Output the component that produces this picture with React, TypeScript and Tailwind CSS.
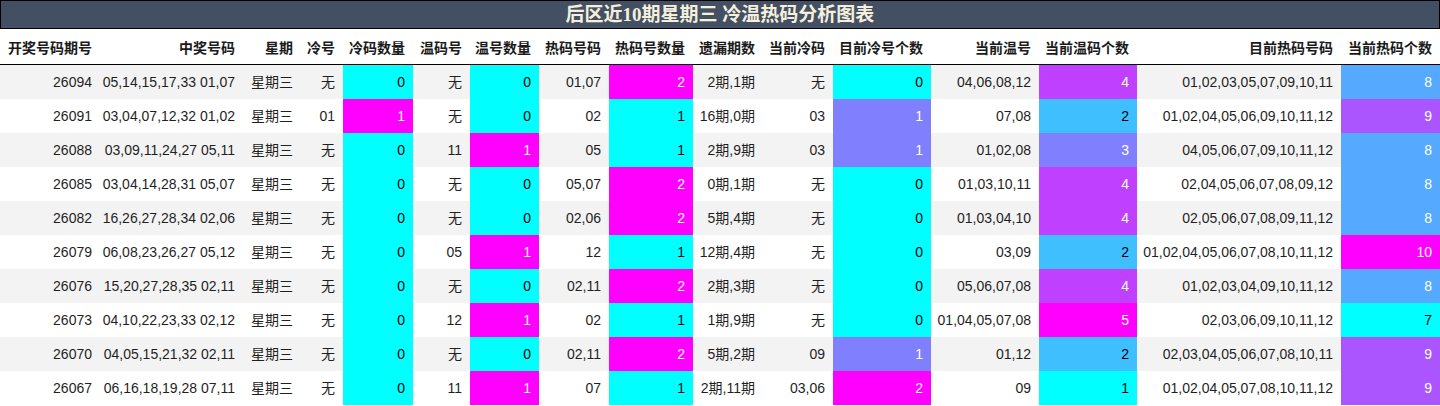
const headers = [
  "开奖号码期号",
  "中奖号码",
  "星期",
  "冷号",
  "冷码数量",
  "温码号",
  "温号数量",
  "热码号码",
  "热码号数量",
  "遗漏期数",
  "当前冷码",
  "目前冷号个数",
  "当前温号",
  "当前温码个数",
  "目前热码号码",
  "当前热码个数",
]

const rows: string[][] = [
  ["26094", "05,14,15,17,33 01,07", "星期三", "无", "0", "无", "0", "01,07", "2", "2期,1期", "无", "0", "04,06,08,12", "4", "01,02,03,05,07,09,10,11", "8"],
  ["26091", "03,04,07,12,32 01,02", "星期三", "01", "1", "无", "0", "02", "1", "16期,0期", "03", "1", "07,08", "2", "01,02,04,05,06,09,10,11,12", "9"],
  ["26088", "03,09,11,24,27 05,11", "星期三", "无", "0", "11", "1", "05", "1", "2期,9期", "03", "1", "01,02,08", "3", "04,05,06,07,09,10,11,12", "8"],
  ["26085", "03,04,14,28,31 05,07", "星期三", "无", "0", "无", "0", "05,07", "2", "0期,1期", "无", "0", "01,03,10,11", "4", "02,04,05,06,07,08,09,12", "8"],
  ["26082", "16,26,27,28,34 02,06", "星期三", "无", "0", "无", "0", "02,06", "2", "5期,4期", "无", "0", "01,03,04,10", "4", "02,05,06,07,08,09,11,12", "8"],
  ["26079", "06,08,23,26,27 05,12", "星期三", "无", "0", "05", "1", "12", "1", "12期,4期", "无", "0", "03,09", "2", "01,02,04,05,06,07,08,10,11,12", "10"],
  ["26076", "15,20,27,28,35 02,11", "星期三", "无", "0", "无", "0", "02,11", "2", "2期,3期", "无", "0", "05,06,07,08", "4", "01,02,03,04,09,10,11,12", "8"],
  ["26073", "04,10,22,23,33 02,12", "星期三", "无", "0", "12", "1", "02", "1", "1期,9期", "无", "0", "01,04,05,07,08", "5", "02,03,06,09,10,11,12", "7"],
  ["26070", "04,05,15,21,32 02,11", "星期三", "无", "0", "无", "0", "02,11", "2", "5期,2期", "09", "1", "01,12", "2", "02,03,04,05,06,07,08,10,11", "9"],
  ["26067", "06,16,18,19,28 07,11", "星期三", "无", "0", "11", "1", "07", "1", "2期,11期", "03,06", "2", "09", "1", "01,02,04,05,07,08,10,11,12", "9"],
]

// columns that get a cyan -> magenta colour scale
const scaled = [4, 6, 8, 11, 13, 15]

// keyed by t * 12
const scale: Record<number, string> = {
  0: "bg-[#00ffff] text-black",
  3: "bg-[#40bfff] text-black",
  4: "bg-[#55aaff] text-white",
  6: "bg-[#8080ff] text-white",
  8: "bg-[#aa55ff] text-white",
  9: "bg-[#bf40ff] text-white",
  12: "bg-[#ff00ff] text-white",
}

function cellColor(col: number, value: string) {
  const nums = rows.map((r) => Number(r[col]))
  const min = Math.min(...nums)
  const max = Math.max(...nums)
  const t = max === min ? 0 : (Number(value) - min) / (max - min)
  return scale[Math.round(t * 12)] ?? ""
}

const grid =
  "grid grid-cols-[100px_143px_58px_42px_70px_57px_69px_70px_84px_70px_70px_98px_108px_98px_204px_99px]"

export default function App() {
  return (
    <div className="w-[1440px] h-[406px] overflow-hidden bg-white text-[#1f1f1f] font-['Liberation_Sans','Noto_Sans_CJK_SC',sans-serif] text-[14px]">
      <div className="h-[29px] bg-[#435063] border border-black flex items-center justify-center">
        <span className="text-[19px] font-bold text-[#f5efdc] leading-none font-['Liberation_Serif','Noto_Sans_CJK_SC',serif]">
          后区近10期星期三 冷温热码分析图表
        </span>
      </div>

      <div className={`${grid} h-[36px] border-b border-black`}>
        {headers.map((h) => (
          <div key={h} className="flex items-center justify-end pt-[4px] pr-2 font-bold whitespace-nowrap text-[#1a1a1a]">
            {h}
          </div>
        ))}
      </div>

      {rows.map((row, i) => (
        <div key={row[0]} className={`${grid} h-[34px] ${i % 2 === 0 ? "bg-[#f3f3f3]" : "bg-white"}`}>
          {row.map((cell, c) => (
            <div
              key={c}
              className={`flex items-center justify-end pr-2 whitespace-nowrap ${scaled.includes(c) ? cellColor(c, cell) : ""}`}
            >
              {cell}
            </div>
          ))}
        </div>
      ))}
    </div>
  )
}
